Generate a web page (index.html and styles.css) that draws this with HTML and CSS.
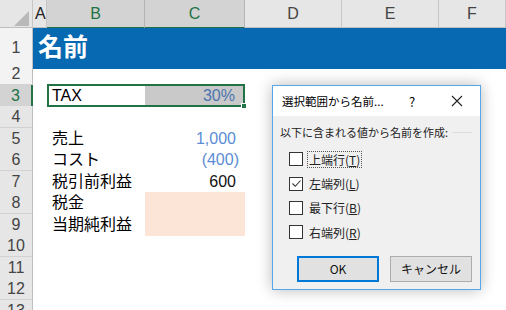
FILE: index.html
```html
<!DOCTYPE html>
<html lang="ja">
<head>
    <meta charset="UTF-8">
    <meta name="viewport" content="width=device-width, initial-scale=1.0">
    <title>名前の作成</title>
    <link rel="stylesheet" href="styles.css">
</head>
<body>
    <div class="sheet">
        <div class="hdr">
            <div class="corner"><span class="tri"></span></div>
            <div class="col col-a">A</div>
            <div class="col sel">B</div>
            <div class="col sel">C</div>
            <div class="col">D</div>
            <div class="col">E</div>
            <div class="col">F</div>
        </div>

        <div class="row row-title">
            <div class="rh light">1</div>
            <div class="title">名前</div>
        </div>

        <div class="row">
            <div class="rh light">2</div>
        </div>

        <div class="row">
            <div class="rh rh-sel">3</div>
            <div class="cell"></div>
            <div class="range">
                <div class="lbl">TAX</div>
                <div class="num pct">30%</div>
                <span class="handle"></span>
            </div>
        </div>

        <div class="row"><div class="rh">4</div></div>

        <div class="row">
            <div class="rh">5</div>
            <div class="cell"></div>
            <div class="lbl">売上</div>
            <div class="num blue">1,000</div>
        </div>
        <div class="row">
            <div class="rh">6</div>
            <div class="cell"></div>
            <div class="lbl">コスト</div>
            <div class="num blue neg">(400)</div>
        </div>
        <div class="row">
            <div class="rh">7</div>
            <div class="cell"></div>
            <div class="lbl">税引前利益</div>
            <div class="num">600</div>
        </div>
        <div class="row">
            <div class="rh">8</div>
            <div class="cell"></div>
            <div class="lbl">税金</div>
            <div class="num input"></div>
        </div>
        <div class="row">
            <div class="rh">9</div>
            <div class="cell"></div>
            <div class="lbl">当期純利益</div>
            <div class="num input"></div>
        </div>

        <div class="row"><div class="rh">10</div></div>
        <div class="row"><div class="rh">11</div></div>
        <div class="row"><div class="rh">12</div></div>
        <div class="row"><div class="rh">13</div></div>
    </div>

    <!-- 選択範囲から名前を作成 dialog -->
    <div class="dlg">
        <div class="dlg-title">
            <span class="dlg-name">選択範囲から名前...</span>
            <span class="help">?</span>
            <span class="close">
                <svg width="12" height="12" viewBox="0 0 12 12">
                    <path d="M1 1 L11 11 M11 1 L1 11" stroke="#222" stroke-width="1.1" fill="none"/>
                </svg>
            </span>
        </div>
        <div class="dlg-body">
            <div class="grp">
                <span>以下に含まれる値から名前を作成:</span>
                <span class="grp-line"></span>
            </div>
            <ul class="checks">
                <li><span class="box"></span><span class="opt focus">上端行(<u>T</u>)</span></li>
                <li>
                    <span class="box">
                        <svg width="11" height="11" viewBox="0 0 11 11">
                            <path d="M1.5 5.5 L4.3 8.3 L9.5 2.5" stroke="#333" stroke-width="1.1" fill="none"/>
                        </svg>
                    </span>
                    <span class="opt">左端列(<u>L</u>)</span>
                </li>
                <li><span class="box"></span><span class="opt">最下行(<u>B</u>)</span></li>
                <li><span class="box"></span><span class="opt">右端列(<u>R</u>)</span></li>
            </ul>
            <div class="btns">
                <button class="btn ok">OK</button>
                <button class="btn">キャンセル</button>
            </div>
        </div>
    </div>
</body>
</html>
```

FILE: styles.css
```css
* {
    margin: 0;
    padding: 0;
    box-sizing: border-box;
}

body {
    background: #ffffff;
    font-family: "Liberation Sans", "Noto Sans CJK JP", sans-serif;
    color: #000;
    width: 506px;
    height: 310px;
    overflow: hidden;
    position: relative;
}

.hdr,
.row {
    display: grid;
    grid-template-columns: 33px 14px 98px 100px 97px 97px 1fr;
}

/* column headers */
.hdr {
    height: 28px;
    background: #e6e6e6;
    border-bottom: 1px solid #bfbfbf;
}

.corner {
    position: relative;
    border-right: 1px solid #c6c6c6;
}

.tri {
    position: absolute;
    right: 3px;
    bottom: 3px;
    width: 15px;
    height: 15px;
    background: #b9b9b9;
    clip-path: polygon(100% 0, 100% 100%, 0 100%);
}

.col {
    font-size: 16px;
    color: #444;
    text-align: center;
    line-height: 27px;
    border-right: 1px solid #c6c6c6;
}

.col-a {
    text-align: left;
    padding-left: 2px;
    color: #222;
}

.col.sel {
    background: #d3d3d3;
    color: #217346;
    border-bottom: 2px solid #217346;
    border-right-color: #b4b4b4;
}

/* rows */
.row {
    height: 21.5px;
}

.row-title {
    height: 35px;
}

.rh {
    background: #e6e6e6;
    border-right: 1px solid #bfbfbf;
    border-bottom: 1px solid #d2d2d2;
    font-size: 16px;
    color: #444;
    text-align: center;
    line-height: 21px;
}

.rh.light {
    background: #f3f3f3;
}

.row-title .rh {
    line-height: 40px;
}

.rh-sel {
    background: #d3d3d3;
    color: #217346;
    border-right: 2px solid #217346;
}

.title {
    grid-column: 2 / -1;
    background: #0769b2;
    color: #fff;
    font-family: "Noto Sans CJK JP", sans-serif;
    font-weight: bold;
    font-size: 25px;
    line-height: 35px;
    padding-left: 5px;
}

.lbl {
    font-size: 16px;
    line-height: 21px;
    padding-left: 5px;
    white-space: nowrap;
}

.num {
    font-size: 16px;
    line-height: 21px;
    text-align: right;
    padding-right: 9px;
    color: #111;
}

.blue {
    color: #5b8cd4;
}

.neg {
    padding-right: 6px;
}

.input {
    background: #fce4d6;
}

.range {
    grid-column: 3 / 5;
    position: relative;
    display: grid;
    grid-template-columns: 96px 1fr;
    border: 2px solid #217346;
    margin-top: -1px;
}

.range .lbl {
    padding-left: 3px;
    line-height: 19px;
}

.pct {
    background: #c9c9c9;
    color: #4d74b0;
    line-height: 19px;
    padding-right: 8px;
}

.handle {
    position: absolute;
    right: -4px;
    bottom: -4px;
    width: 6px;
    height: 6px;
    background: #217346;
    border: 1px solid #fff;
}

/* dialog */
.dlg {
    position: absolute;
    left: 272px;
    top: 85px;
    width: 209px;
    height: 205px;
    border: 1px solid #55a7ea;
    background: #f0f0f0;
    box-shadow: 0 0 14px rgba(0, 0, 0, 0.28);
    font-family: "Noto Sans CJK JP", sans-serif;
    color: #000;
    display: flex;
    flex-direction: column;
}

.dlg-title {
    height: 30px;
    background: #fff;
    display: flex;
    align-items: center;
    padding-left: 9px;
    font-size: 11.5px;
}

.dlg-name {
    width: 127px;
}

.help {
    width: 42px;
    font-size: 13px;
}

.close {
    display: flex;
    align-items: center;
}

.dlg-body {
    flex: 1;
    padding: 8px 8px 0 7px;
}

.grp {
    display: flex;
    align-items: center;
    gap: 4px;
    font-size: 11px;
    height: 16px;
    color: #222;
}

.grp-line {
    flex: 1;
    height: 1px;
    background: #dcdcdc;
}

.checks {
    list-style: none;
    padding: 7px 0 0 9px;
}

.checks li {
    display: flex;
    align-items: center;
    height: 24.4px;
    font-size: 12px;
    color: #222;
}

.box {
    width: 14px;
    height: 14px;
    border: 1px solid #333;
    background: #fff;
    display: flex;
    align-items: center;
    justify-content: center;
    margin-right: 4px;
}

.opt {
    padding: 0 1px;
    line-height: 15px;
    border: 1px solid transparent;
}

.opt.focus {
    border: 1px dotted #555;
}

.btns {
    display: flex;
    gap: 11px;
    padding: 11px 0 0 17px;
}

.btn {
    width: 82px;
    height: 26px;
    background: #e1e1e1;
    border: 1px solid #adadad;
    font-family: "Noto Sans CJK JP", sans-serif;
    font-size: 12px;
    color: #111;
}

.btn.ok {
    border: 2px solid #0078d7;
}
```
